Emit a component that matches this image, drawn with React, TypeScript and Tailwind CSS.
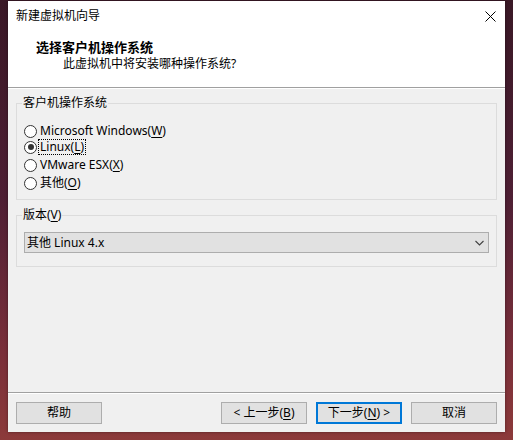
import React from "react";

const font = { fontFamily: '"Noto Sans", "Noto Sans CJK SC", sans-serif' };

function U({ children }: { children: React.ReactNode }) {
  return <span className="underline underline-offset-[2px]">{children}</span>;
}

function Radio({ checked, children, focus, className = "" }: { checked?: boolean; children: React.ReactNode; focus?: boolean; className?: string }) {
  return (
    <div className={"flex h-[16px] items-center " + className}>
      <span className="flex h-[13px] w-[13px] items-center justify-center rounded-full border border-[#333333] bg-white">
        {checked && <span className="h-[6px] w-[6px] rounded-full bg-[#333333]" />}
      </span>
      <span className={"ml-[2px] px-[1px] leading-[14px] " + (focus ? "outline-1 outline-dotted outline-black" : "")}>{children}</span>
    </div>
  );
}

function Btn({ children, primary }: { children: React.ReactNode; primary?: boolean }) {
  return (
    <div
      className={
        "flex h-[22px] w-[86px] items-center justify-center bg-[#e1e1e1] text-[12px] leading-[14px] text-black " +
        (primary ? "border-2 border-[#0078d7]" : "border border-[#adadad]")
      }
    >
      {children}
    </div>
  );
}

export default function App() {
  return (
    <div className="h-[440px] w-[513px] overflow-hidden bg-[linear-gradient(180deg,#3a1826_0%,#4e1f34_45%,#7a2f3a_80%,#8c3a3a_100%)] pl-[8px] pt-[1px]" style={font}>
      <div className="flex h-[431px] w-[497px] flex-col bg-[#f0f0f0] text-[12px] text-black shadow-[0_0_3px_rgba(0,0,0,0.4)]">
        {/* title bar */}
        <div className="flex h-[30px] items-center justify-between bg-white pl-[8px] pr-[10px]">
          <span className="leading-[16px]">新建虚拟机向导</span>
          <svg width="11" height="11" viewBox="0 0 11 11" className="mr-[-1px]">
            <path d="M0.5 0.5 L10.5 10.5 M10.5 0.5 L0.5 10.5" stroke="#000" strokeWidth="1" fill="none" />
          </svg>
        </div>
        {/* header */}
        <div className="h-[56px] bg-white pt-[8px]">
          <div className="pl-[28px] text-[13px] font-bold leading-[16px]">选择客户机操作系统</div>
          <div className="pl-[55px] leading-[17px]">此虚拟机中将安装哪种操作系统?</div>
        </div>
        <div className="h-px bg-[#a0a0a0]" />
        <div className="h-px bg-white" />
        {/* body */}
        <div className="flex flex-1 flex-col px-[8px] pt-[6px]">
          <fieldset className="border border-[#dcdcdc] pb-[8px] pl-[5px]">
            <legend className="px-[1px] leading-[16px]">客户机操作系统</legend>
            <div className="ml-[2px] flex flex-col pt-[12px]">
              <Radio>
                Microsoft Windows(<U>W</U>)
              </Radio>
              <Radio checked focus>
                Linux(<U>L</U>)
              </Radio>
              <Radio className="mt-[2px]">
                VMware ESX(<U>X</U>)
              </Radio>
              <Radio className="mt-[2px]">
                其他(<U>O</U>)
              </Radio>
            </div>
          </fieldset>
          <fieldset className="mt-[7px] border border-[#dcdcdc] pb-[13px] pl-[5px] pr-[7px]">
            <legend className="px-[1px] leading-[16px]">
              版本(<U>V</U>)
            </legend>
            <div className="ml-[2px] mt-[9px] flex h-[21px] items-center justify-between border border-[#adadad] bg-[#e1e1e1] pl-[2px] pr-[4px]">
              <span className="leading-[14px]">其他 Linux 4.x</span>
              <svg width="9" height="6" viewBox="0 0 9 6">
                <path d="M0.5 1 L4.5 5 L8.5 1" stroke="#404040" strokeWidth="1.1" fill="none" />
              </svg>
            </div>
          </fieldset>
        </div>
        {/* footer */}
        <div className="h-px bg-[#a0a0a0]" />
        <div className="h-px bg-white" />
        <div className="flex items-center justify-between px-[8px] pb-[8px] pt-[8px]">
          <Btn>帮助</Btn>
          <div className="flex gap-[9px]">
            <Btn>
              &lt; 上一步(<U>B</U>)
            </Btn>
            <Btn primary>
              下一步(<U>N</U>) &gt;
            </Btn>
            <Btn>取消</Btn>
          </div>
        </div>
      </div>
    </div>
  );
}
